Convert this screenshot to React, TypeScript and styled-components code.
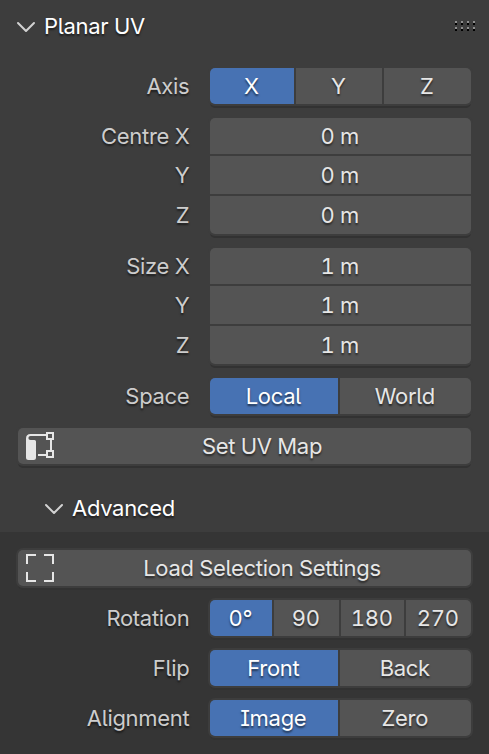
import React from 'react';
import styled, { createGlobalStyle } from 'styled-components';

const Global = createGlobalStyle`
  body { margin: 0; background: #3d3d3d; }
  * { box-sizing: border-box; }
`;

const Panel = styled.main`
  width: 489px;
  height: 754px;
  overflow: hidden;
  display: flex;
  flex-direction: column;
  background: #3d3d3d;
  color: #e6e6e6;
  font: 400 22px/36px Inter, sans-serif;
  font-feature-settings: 'ss04', 'tnum';
  letter-spacing: -0.3px;
  text-shadow: 0 2px 2px rgba(0, 0, 0, 0.55);
  white-space: nowrap;
`;

const Header = styled.header<{ $sub?: boolean }>`
  display: flex;
  align-items: center;
  height: ${p => (p.$sub ? 48 : 52)}px;
  padding: 0 14px 0 ${p => (p.$sub ? 44 : 16)}px;
  color: #fff;
`;

const Title = styled.span`
  margin-left: 8px;
  flex: 1;
`;

const Body = styled.section<{ $sub?: boolean }>`
  display: flex;
  flex-direction: column;
  gap: 14px;
  padding: ${p => (p.$sub ? '18px 18px 18px' : '16px 18px 20px')};
  background: ${p => (p.$sub ? '#353535' : '#3d3d3d')};
  flex: ${p => (p.$sub ? 1 : 'none')};
`;

const Row = styled.div`
  display: grid;
  grid-template-columns: 172px 261px;
  column-gap: 20px;
`;

const Labels = styled.div`
  display: grid;
  grid-template-rows: 36px 38px 38px;
  row-gap: 2px;
  padding-right: 0.6px;
  text-align: right;
  color: #cdcdcd;
  align-items: center;
`;

const Label = styled.span`
  padding-right: 0.6px;
  text-align: right;
  color: #cdcdcd;
`;

const frame = `
  border-radius: 5px;
  background: #3d3d3d;
  box-shadow: 0 0 0 2px #3d3d3d, 0 4px 0 0 #323232;
`;

const Segments = styled.div<{ $cols: string }>`
  ${frame}
  display: grid;
  grid-template-columns: ${p => p.$cols};
  column-gap: 2px;
  height: 36px;
  text-align: center;
`;

const Segment = styled.div<{ $on?: boolean }>`
  padding-right: 1.4px;
  background: ${p => (p.$on ? '#4772b3' : '#545454')};
  color: ${p => (p.$on ? '#fff' : '#e6e6e6')};
  &:first-child { border-radius: 5px 0 0 5px; }
  &:last-child { border-radius: 0 5px 5px 0; }
`;

const Fields = styled.div`
  ${frame}
  display: grid;
  grid-template-rows: 36px 38px 38px;
  row-gap: 2px;
  text-align: center;
`;

const Field = styled.div`
  display: grid;
  place-items: center;
  padding-right: 1.4px;
  background: #545454;
  &:first-child { border-radius: 5px 5px 0 0; }
  &:last-child { border-radius: 0 0 5px 5px; }
`;

const Button = styled.div`
  ${frame}
  display: grid;
  grid-template-columns: 44px 1fr;
  align-items: center;
  height: 36px;
  background: #545454;
`;

const ButtonText = styled.span`
  text-align: center;
  padding-right: 9px;
`;

const Glyph = styled.svg`
  display: block;
  margin-left: 8px;
`;

const Chevron = () => (
  <svg width="20" height="20" viewBox="0 0 20 20" fill="none" stroke="#d2d2d2" strokeWidth="2" strokeLinecap="round" strokeLinejoin="round">
    <path d="M2 7 10 15 18 7" />
  </svg>
);

const Grip = () => (
  <svg width="20" height="10" viewBox="0 0 20 10" shapeRendering="crispEdges">
    {[0, 6, 12, 18].map(x => [0, 6].map(y => (
      <g key={`${x}-${y}`}>
        <rect x={x} y={y} width="2" height="2" fill="#8f8f8f" />
        <rect x={x} y={y + 2} width="2" height="2" fill="#000" />
      </g>
    )))}
  </svg>
);

const UvIcon = () => (
  <Glyph width="28" height="28" viewBox="0 0 28 28" fill="none" stroke="#e6e6e6" strokeWidth="2">
    <path d="M0 6.5Q0 2 4.5 2H20V4H4.5Q2.4 4.2 2.4 6Q2.4 8 4.5 8H8.5Q10 8 10 9.5V25.5Q10 28 7.5 28H2.5Q0 28 0 25.5Z" fill="#e6e6e6" stroke="none" />
    <path d="M25 8V18M12 23H20" />
    <rect x="21" y="1" width="6" height="6" />
    <rect x="21" y="19" width="6" height="6" />
  </Glyph>
);

const SelectIcon = () => (
  <Glyph width="28" height="28" viewBox="0 0 28 28" fill="none" stroke="#e6e6e6" strokeWidth="2">
    <path d="M1 10V1H10M18 1H27V10M27 18V27H18M10 27H1V18" />
  </Glyph>
);

function Choice({ label, cols, items }: { label: string; cols: string; items: string[] }) {
  return (
    <Row>
      <Label>{label}</Label>
      <Segments $cols={cols}>
        {items.map((item, i) => <Segment key={item} $on={i === 0}>{item}</Segment>)}
      </Segments>
    </Row>
  );
}

function Vector({ label, value }: { label: string; value: string }) {
  return (
    <Row>
      <Labels><span>{label} X</span><span>Y</span><span>Z</span></Labels>
      <Fields><Field>{value}</Field><Field>{value}</Field><Field>{value}</Field></Fields>
    </Row>
  );
}

export default function App() {
  return (
    <Panel>
      <Global />
      <Header><Chevron /><Title>Planar UV</Title><Grip /></Header>
      <Body>
        <Choice label="Axis" cols="84px 86px 87px" items={['X', 'Y', 'Z']} />
        <Vector label="Centre" value="0 m" />
        <Vector label="Size" value="1 m" />
        <Choice label="Space" cols="128px 131px" items={['Local', 'World']} />
        <Button><UvIcon /><ButtonText>Set UV Map</ButtonText></Button>
      </Body>
      <Header $sub><Chevron /><Title>Advanced</Title></Header>
      <Body $sub>
        <Button><SelectIcon /><ButtonText>Load Selection Settings</ButtonText></Button>
        <Choice label="Rotation" cols="62px 65px 63px 65px" items={['0°', '90', '180', '270']} />
        <Choice label="Flip" cols="128px 131px" items={['Front', 'Back']} />
        <Choice label="Alignment" cols="128px 131px" items={['Image', 'Zero']} />
      </Body>
    </Panel>
  );
}
